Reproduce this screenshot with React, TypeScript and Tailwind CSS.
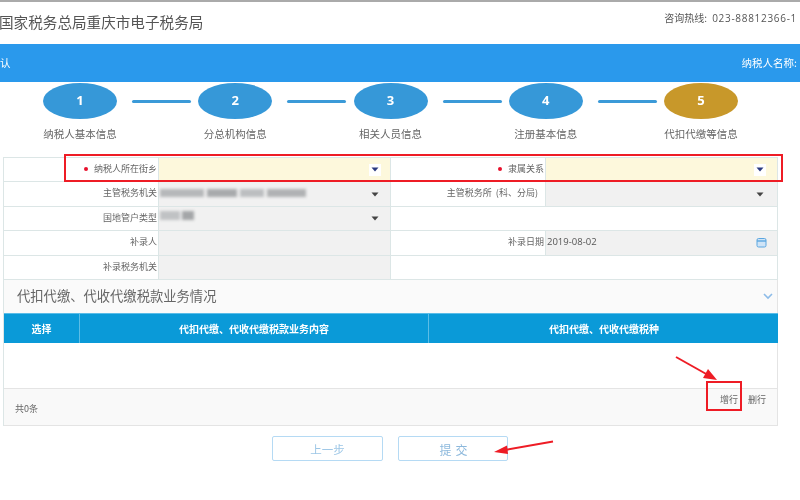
import React from "react";

const steps = ["纳税人基本信息", "分总机构信息", "相关人员信息", "注册基本信息", "代扣代缴等信息"];

function Caret({ color }: { color: string }) {
  return (
    <svg width="8" height="5" viewBox="0 0 8 5" className="shrink-0">
      <path d="M0.5 0.5h7L4 4.5z" fill={color} />
    </svg>
  );
}

function Label({ text, required, dotGap }: { text: string; required?: boolean; dotGap?: string }) {
  return (
    <div className="flex items-center justify-end border-r border-b border-[#dce6e6] bg-white pb-[2px] pr-[1px] text-[9px] text-[#666]">
      {required && <span className={`h-[4px] w-[4px] rounded-full bg-[#e8102c] ${dotGap ?? "mr-[5px]"}`} />}
      <span>{text}</span>
    </div>
  );
}

function Value({
  kind,
  tight,
  span,
  children,
}: {
  kind: "yellow" | "gray" | "white";
  tight?: boolean;
  span?: boolean;
  children?: React.ReactNode;
}) {
  const bg = kind === "yellow" ? "bg-[#fdf8dc]" : kind === "gray" ? "bg-[#f1f1f1]" : "bg-white";
  return (
    <div
      className={`flex items-center justify-between border-r border-b border-[#dce6e6] pl-[1px] ${
        tight ? "pr-[9px]" : "pr-[11px]"
      } ${span ? "col-span-2" : ""} ${bg}`}
    >
      {children}
    </div>
  );
}

export default function App() {
  return (
    <div className="relative h-[500px] w-[800px] overflow-hidden bg-white font-['Noto_Sans_CJK_SC','Noto_Sans',sans-serif] blur-[0.6px]">
      <div className="h-[2px] bg-[#aaaaaa]" />
      <div className="flex h-[42px] items-start justify-between bg-white">
        <div className="ml-[-1px] mt-[10px] text-[14.6px] leading-[20px] text-[#555]">国家税务总局重庆市电子税务局</div>
        <div className="mr-[3px] mt-[9px] text-[10px] leading-[14px] text-[#555]">
          咨询热线:<span className="ml-[5px] font-['Open_Sans',sans-serif] text-[10px] tracking-[0.7px]">023-88812366-1</span>
        </div>
      </div>
      <div className="flex h-[38px] items-center justify-between bg-[#2a99ec] text-[10.5px] text-white">
        <span>认</span>
        <span className="mr-[3px]">纳税人名称:</span>
      </div>

      <div className="flex h-[75px] items-start pl-[43px] pt-[1px]">
        {steps.map((s, i) => (
          <React.Fragment key={s}>
            {i > 0 && <div className="ml-[15px] mr-[7.25px] mt-[17px] h-[3px] w-[59px] shrink-0 rounded-full bg-[#3b9ad8]" />}
            <div className="flex w-[74px] shrink-0 flex-col items-center">
              <div
                className={`flex h-[36px] w-[74px] items-center justify-center rounded-[50%] font-['Open_Sans',sans-serif] text-[13px] font-bold text-white ${
                  i === 4 ? "bg-[#c8982a]" : "bg-[#3698d8]"
                }`}
              >
                {i + 1}
              </div>
              <div className="mt-[8px] whitespace-nowrap text-[10.5px] leading-[14px] text-[#666]">{s}</div>
            </div>
          </React.Fragment>
        ))}
      </div>

      <div className="ml-[3px] w-[775px] border-l border-[#dce6e6]">
        <div className="grid grid-cols-[155px_232px_155px_232px] grid-rows-[repeat(5,24.4px)] border-t border-[#dce6e6]">
          <Label text="纳税人所在街乡" required dotGap="mr-[6px]" />
          <Value kind="yellow" tight>
            <span />
            <span className="flex h-[12px] w-[12px] items-center justify-center bg-white">
              <Caret color="#2b3a80" />
            </span>
          </Value>
          <Label text="隶属关系" required dotGap="mr-[6px]" />
          <Value kind="yellow">
            <span />
            <span className="flex h-[12px] w-[12px] items-center justify-center bg-white">
              <Caret color="#2b3a80" />
            </span>
          </Value>

          <Label text="主管税务机关" />
          <Value kind="gray" tight>
            <div className="mb-[3px] flex h-[8px] w-[146px] gap-[3px] blur-[1.5px]">
              <div className="w-[44px] bg-[#b6b8ba]" />
              <div className="w-[30px] bg-[#a8aaac]" />
              <div className="w-[24px] bg-[#bcbec0]" />
              <div className="w-[39px] bg-[#b0b2b4]" />
            </div>
            <span className="mr-[2px]"><Caret color="#444" /></span>
          </Value>
          <Label text={"主管税务所\u00a0\u00a0(科、分局)\u00a0\u00a0\u00a0"} />
          <Value kind="gray">
            <span />
            <span className="mr-[2px]"><Caret color="#444" /></span>
          </Value>

          <Label text="国地管户类型" />
          <Value kind="gray" tight>
            <div className="mb-[6px] flex h-[9px] w-[34px] gap-[2px] blur-[1.5px]">
              <div className="w-[20px] bg-[#c0c2c4]" />
              <div className="w-[12px] bg-[#a4a6a8]" />
            </div>
            <span className="mr-[2px]"><Caret color="#444" /></span>
          </Value>
          <Value kind="white" span />

          <Label text="补录人" />
          <Value kind="gray" />
          <Label text="补录日期" />
          <Value kind="gray">
            <span className="mb-[1px] font-['Open_Sans',sans-serif] text-[9.5px] text-[#555]">2019-08-02</span>
            <svg width="11" height="11" viewBox="0 0 11 11" className="mr-[-1px]">
              <rect x="1" y="1.5" width="9" height="8.5" rx="1.5" fill="#cfe4f7" stroke="#5ba6e0" strokeWidth="1" />
              <path d="M1 4h9" stroke="#5ba6e0" strokeWidth="1.4" />
            </svg>
          </Value>

          <Label text="补录税务机关" />
          <Value kind="gray" />
          <Value kind="white" span />
        </div>

        <div className="flex h-[33px] items-center justify-between border-r border-[#e4e4e4] bg-[#fafafa] pl-[13px] pr-[3px]">
          <span className="text-[13.3px] text-[#666]">代扣代缴、代收代缴税款业务情况</span>
          <svg width="12" height="8" viewBox="0 0 12 8">
            <path d="M2 2l4 4 4-4" fill="none" stroke="#8cbbe8" strokeWidth="1.6" />
          </svg>
        </div>

        <div className="grid h-[30px] grid-cols-[76px_349px_350px] border-t border-[#59bce8] bg-[#0a9ad8] text-[10px] font-bold text-white">
          <div className="flex items-center justify-center border-r border-[#5cbde6]">选择</div>
          <div className="flex items-center justify-center border-r border-[#5cbde6]">代扣代缴、代收代缴税款业务内容</div>
          <div className="flex items-center justify-center">代扣代缴、代收代缴税种</div>
        </div>

        <div className="h-[45px] border-r border-[#e4e4e4] bg-white" />

        <div className="flex h-[38px] items-start justify-between border-y border-r border-[#e4e4e4] bg-[#f9f9f9] pl-[11px] pr-[11px] text-[9px] text-[#666]">
          <span className="mt-[13px]">共0条</span>
          <div className="mt-[4px] flex gap-[10px]">
            <span>增行</span>
            <span>删行</span>
          </div>
        </div>
      </div>

      <div className="mt-[10px] flex gap-[15px] pl-[272px]">
        <button className="flex h-[25px] w-[111px] items-center justify-center rounded-[2px] border border-[#b5daf4] bg-white pt-[3px] text-[11.5px] text-[#9cc6e6]">
          上一步
        </button>
        <button className="flex h-[25px] w-[110px] items-center justify-center rounded-[2px] border border-[#b5daf4] bg-white pl-[5px] pt-[3px] text-[12px] tracking-[4px] text-[#8cb8dc]">
          提交
        </button>
      </div>

      <div className="absolute left-[64px] top-[154px] h-[28px] w-[719px] border-2 border-[#ee1c25]" />
      <div className="absolute left-[706px] top-[381px] h-[30px] w-[36px] border-2 border-[#ee1c25]" />
      <svg className="absolute left-0 top-0" width="800" height="500" viewBox="0 0 800 500">
        <path d="M676 357L708 375" stroke="#ee1c25" strokeWidth="2" fill="none" />
        <path d="M717 380L703 378L708 369z" fill="#ee1c25" />
        <path d="M553 441.500L505 450" stroke="#ee1c25" strokeWidth="2" fill="none" />
        <path d="M494 452L507 445.500L508 454z" fill="#ee1c25" />
      </svg>
    </div>
  );
}
